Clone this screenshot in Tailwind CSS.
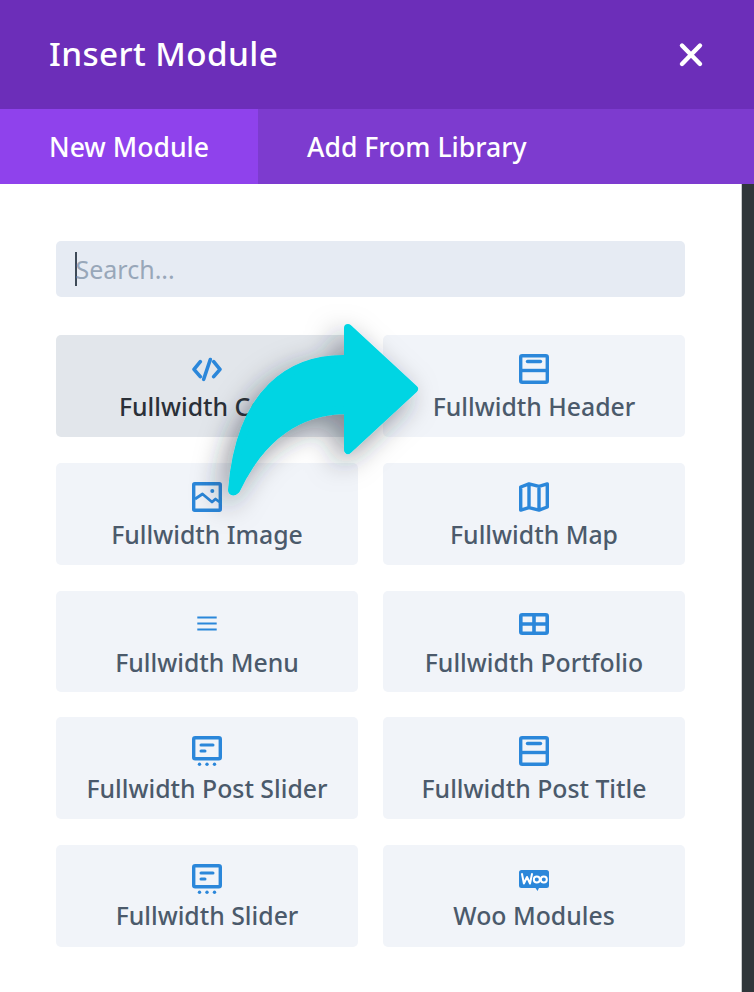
<!DOCTYPE html>
<html lang="en">
<head>
  <meta charset="UTF-8" />
  <meta name="viewport" content="width=device-width, initial-scale=1.0" />
  <title>Insert Module</title>
  <script src="https://cdn.jsdelivr.net/npm/@tailwindcss/browser@4"></script>
</head>
<body class="relative h-[992px] w-[754px] overflow-hidden bg-white font-['Noto_Sans',sans-serif]">

  <!-- Header -->
  <header class="flex h-[109px] items-center justify-between bg-[#6c2eb9] pl-[49px] pr-[50px] text-white">
    <h1 class="pb-[2px] text-[33.3px] leading-none font-medium tracking-[0.4px]">Insert Module</h1>
    <svg class="h-[26px] w-[26px]" viewBox="0 0 26 26" fill="none" stroke="white" stroke-width="4.4" stroke-linecap="round">
      <path d="M4 3.500 22 22M22 3.500 4 22" />
    </svg>
  </header>

  <!-- Tabs -->
  <nav class="flex h-[75px] bg-[#7d3bcf] text-[26.6px] font-medium text-white">
    <div class="flex w-[258px] items-center bg-[#8f42ec] pl-[49px] pt-[2px]">New Module</div>
    <div class="flex items-center pl-[49px] pt-[2px]">Add From Library</div>
  </nav>

  <div class="flex h-[808px]">
    <main class="w-[742px] pl-[56px] pr-[57px] pt-[57px]">
      <!-- Search -->
      <div class="flex h-[56px] items-center rounded-[5px] bg-[#e6ebf3] pl-[19px] text-[25px] text-[#98a7b9]">
        <span class="h-[34px] w-[1.5px] bg-[#3e4a57]"></span>
        <span class="-ml-[1px] pt-[2px]">Search...</span>
      </div>

      <!-- Modules -->
      <div class="mt-[38px] grid grid-cols-2 gap-x-[25px] gap-y-[26px] text-[24.8px] font-medium text-[#4b5a6b]">
        <div class="flex h-[102px] flex-col items-center rounded-[5px] bg-[#e2e6eb] pt-[19px] text-[#2a3038]">
          <svg class="h-[30px] w-[30px]" viewBox="0 0 30 30" fill="none" stroke="#2b87da" stroke-width="3.600" stroke-linecap="round" stroke-linejoin="round">
            <path d="M8.300 7.700 2 15.300l6.300 7.400M21.700 7.700 28 15.300l-6.300 7.400M18.300 5.500 11.700 25.300" />
          </svg>
          <span class="mt-[2px] leading-[40px]">Fullwidth Code</span>
        </div>
        <div class="flex h-[102px] flex-col items-center rounded-[5px] bg-[#f1f4f9] pt-[19px]">
          <svg class="h-[30px] w-[30px]" viewBox="0 0 30 30" fill="none" stroke="#2b87da" stroke-width="3.400" stroke-linejoin="round">
            <rect x="1.700" y="1.700" width="26.600" height="26.600" rx="1.500" />
            <path d="M2 16.500h26" />
            <path d="M8.500 7.500h13" stroke-linecap="round" />
          </svg>
          <span class="mt-[2px] leading-[40px]">Fullwidth Header</span>
        </div>

        <div class="flex h-[102px] flex-col items-center rounded-[5px] bg-[#f1f4f9] pt-[19px]">
          <svg class="h-[30px] w-[30px]" viewBox="0 0 30 30" fill="none" stroke="#2b87da" stroke-width="3.400" stroke-linejoin="round">
            <rect x="1.700" y="1.700" width="26.600" height="26.600" rx="1" />
            <path d="M3 17l7.500-5 9.500 8 3.500-3 4 3" stroke-width="2.800" />
            <circle cx="20.300" cy="9" r="2" fill="#2b87da" stroke="none" />
          </svg>
          <span class="mt-[2px] leading-[40px]">Fullwidth Image</span>
        </div>
        <div class="flex h-[102px] flex-col items-center rounded-[5px] bg-[#f1f4f9] pt-[19px]">
          <svg class="h-[30px] w-[30px]" viewBox="0 0 30 30" fill="none" stroke="#2b87da" stroke-width="3.400" stroke-linejoin="round">
            <path d="M1.700 5 10 1.900l10 2.400 8.300-2.400V25L20 28.100l-10-2.400-8.300 2.400zM10 2v23.500M20 4.500V28" />
          </svg>
          <span class="mt-[2px] leading-[40px]">Fullwidth Map</span>
        </div>

        <div class="flex h-[101px] flex-col items-center rounded-[5px] bg-[#f1f4f9] pt-[19px]">
          <svg class="h-[30px] w-[30px]" viewBox="0 0 30 30" fill="none" stroke="#2b87da" stroke-width="2">
            <path d="M5.300 7.500h19.400M5.300 13.500h19.400M5.300 19.500h19.400" />
          </svg>
          <span class="mt-[2px] leading-[40px]">Fullwidth Menu</span>
        </div>
        <div class="flex h-[101px] flex-col items-center rounded-[5px] bg-[#f1f4f9] pt-[19px]">
          <svg class="h-[30px] w-[30px]" viewBox="0 0 30 30" fill="none" stroke="#2b87da" stroke-width="3.600">
            <rect x="1.800" y="4.800" width="26.400" height="18.400" rx="1.500" />
            <path d="M2 14h26M15 5v18" />
          </svg>
          <span class="mt-[2px] leading-[40px]">Fullwidth Portfolio</span>
        </div>

        <div class="-mt-[1px] flex h-[102px] flex-col items-center rounded-[5px] bg-[#f1f4f9] pt-[19px]">
          <svg class="h-[30px] w-[30px]" viewBox="0 0 30 30" fill="none" stroke="#2b87da" stroke-width="3.400" stroke-linecap="round">
            <rect x="1.700" y="1.700" width="26.600" height="21" rx="1.500" />
            <path d="M9 9h12M9 15h4" stroke-width="3" />
            <circle cx="7.500" cy="28.200" r="1.700" fill="#2b87da" stroke="none" />
            <circle cx="15" cy="28.200" r="1.700" fill="#2b87da" stroke="none" />
            <circle cx="22.500" cy="28.200" r="1.700" fill="#2b87da" stroke="none" />
          </svg>
          <span class="mt-[2px] leading-[40px]">Fullwidth Post Slider</span>
        </div>
        <div class="-mt-[1px] flex h-[102px] flex-col items-center rounded-[5px] bg-[#f1f4f9] pt-[19px]">
          <svg class="h-[30px] w-[30px]" viewBox="0 0 30 30" fill="none" stroke="#2b87da" stroke-width="3.400" stroke-linejoin="round">
            <rect x="1.700" y="1.700" width="26.600" height="26.600" rx="1.500" />
            <path d="M2 16.500h26" />
            <path d="M8.500 7.500h13" stroke-linecap="round" />
          </svg>
          <span class="mt-[2px] leading-[40px]">Fullwidth Post Title</span>
        </div>

        <div class="flex h-[102px] flex-col items-center rounded-[5px] bg-[#f1f4f9] pt-[19px]">
          <svg class="h-[30px] w-[30px]" viewBox="0 0 30 30" fill="none" stroke="#2b87da" stroke-width="3.400" stroke-linecap="round">
            <rect x="1.700" y="1.700" width="26.600" height="21" rx="1.500" />
            <path d="M9 9h12M9 15h4" stroke-width="3" />
            <circle cx="7.500" cy="28.200" r="1.700" fill="#2b87da" stroke="none" />
            <circle cx="15" cy="28.200" r="1.700" fill="#2b87da" stroke="none" />
            <circle cx="22.500" cy="28.200" r="1.700" fill="#2b87da" stroke="none" />
          </svg>
          <span class="mt-[1px] leading-[40px]">Fullwidth Slider</span>
        </div>
        <div class="flex h-[102px] flex-col items-center rounded-[5px] bg-[#f1f4f9] pt-[19px]">
          <svg class="h-[30px] w-[30px]" viewBox="0 0 30 30">
            <path d="M2.500 6h25A2.500 2.500 0 0 1 30 8.500v13a2.500 2.500 0 0 1-2.500 2.500H20l-1.500 3-2-3H2.500A2.500 2.500 0 0 1 0 21.500v-13A2.500 2.500 0 0 1 2.500 6z" fill="#2b87da" />
            <path d="M3 10l1.900 9.500L8 13l3 6.500L13 10" fill="none" stroke="white" stroke-width="2" stroke-linejoin="round" stroke-linecap="round" />
            <circle cx="17.800" cy="15.500" r="3" fill="none" stroke="white" stroke-width="2" />
            <circle cx="24.800" cy="15.500" r="3" fill="none" stroke="white" stroke-width="2" />
          </svg>
          <span class="mt-[1px] leading-[40px]">Woo Modules</span>
        </div>
      </div>
    </main>

    <!-- Edge of the page behind the modal -->
    <div class="w-[12px] bg-[#30363a] shadow-[-1px_0_0_#c8cacc]"></div>
  </div>

  <!-- Arrow overlay -->
  <svg class="absolute left-[150px] top-[300px] h-[260px] w-[320px] overflow-visible" viewBox="150 300 320 260">
    <defs>
      <filter id="arrowShadow" x="-40%" y="-40%" width="180%" height="180%">
        <feDropShadow dx="-8" dy="9" stdDeviation="14" flood-color="#1f2a36" flood-opacity="0.5" />
      </filter>
    </defs>
    <path filter="url(#arrowShadow)" fill="#03d5e3" stroke="#03d5e3" stroke-width="8" stroke-linejoin="round"
      d="M348 328 414 389 348 450 348 410C300 410 262 435 236 490 234 492 232 492 232 490 240 390 292 357 348 359Z" />
  </svg>

</body>
</html>
